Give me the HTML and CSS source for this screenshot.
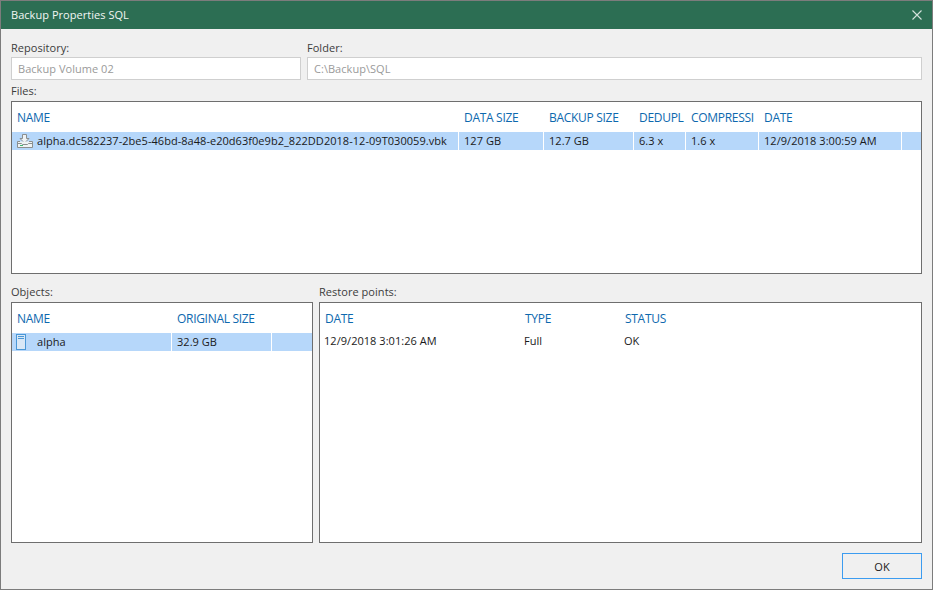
FILE: index.html
```html
<!DOCTYPE html>
<html lang="en">
<head>
<meta charset="utf-8">
<title>Backup Properties SQL</title>
<link rel="stylesheet" href="styles.css">
</head>
<body>
<div class="window">
  <header class="titlebar">
    <span class="title">Backup Properties SQL</span>
    <svg class="close" width="12" height="12" viewBox="0 0 12 12"><path d="M1.5 1.5l9 9M10.5 1.5l-9 9" stroke="#d5e2dc" stroke-width="1.1" fill="none"/></svg>
  </header>
  <main class="content">
    <div class="fields">
      <div class="field">
        <label class="label">Repository:</label>
        <div class="input">Backup Volume 02</div>
      </div>
      <div class="field">
        <label class="label">Folder:</label>
        <div class="input">C:\Backup\SQL</div>
      </div>
    </div>
    <div class="label files-label">Files:</div>
    <section class="list files">
      <div class="row head files-cols">
        <span>NAME</span><span>DATA SIZE</span><span>BACKUP SIZE</span><span>DEDUPL</span><span>COMPRESSI</span><span>DATE</span><span></span>
      </div>
      <div class="row selected files-cols">
        <span class="cell-icon">
          <svg width="18" height="16" viewBox="0 0 18 16"><path d="M6.5 1.5h4v4h2.5l-4.5 4.5L4 5.5h2.5z" fill="#eef2f4" stroke="#8b8f8f"/><path d="M4 8.5H1.5v6h15v-6H13" fill="#eef2f4" stroke="#8b8f8f"/><path d="M1.5 10.5h4l1 1h5l1-1h4" fill="none" stroke="#8b8f8f"/><path d="M4 12.5h3" stroke="#3fb56f" stroke-width="1"/></svg>
          <span class="cell-text">alpha.dc582237-2be5-46bd-8a48-e20d63f0e9b2_822DD2018-12-09T030059.vbk</span>
        </span>
        <span>127 GB</span><span>12.7 GB</span><span>6.3 x</span><span>1.6 x</span><span>12/9/2018 3:00:59 AM</span><span></span>
      </div>
    </section>
    <div class="lower">
      <div class="pane">
        <div class="label">Objects:</div>
        <section class="list grow">
          <div class="row head objects-cols">
            <span>NAME</span><span>ORIGINAL SIZE</span><span></span>
          </div>
          <div class="row selected objects-cols">
            <span class="cell-icon">
              <svg width="18" height="16" viewBox="0 0 18 16"><rect x="0.5" y="0.5" width="9" height="15" fill="#d8e7f6" stroke="#4a97d6"/><path d="M2 2.5h6M2 4.5h6" stroke="#4a97d6"/></svg>
              <span class="cell-text">alpha</span>
            </span>
            <span>32.9 GB</span><span></span>
          </div>
        </section>
      </div>
      <div class="pane">
        <div class="label">Restore points:</div>
        <section class="list grow">
          <div class="row head points-cols">
            <span>DATE</span><span>TYPE</span><span>STATUS</span>
          </div>
          <div class="row points-cols plain">
            <span>12/9/2018 3:01:26 AM</span><span>Full</span><span>OK</span>
          </div>
        </section>
      </div>
    </div>
    <footer class="actions">
      <button class="btn" type="button">OK</button>
    </footer>
  </main>
</div>
</body>
</html>
```

FILE: styles.css
```css
* { box-sizing: border-box; }
html, body { margin: 0; height: 100%; }
body {
  font-family: "Open Sans", "Noto Sans", "Liberation Sans", sans-serif;
  font-size: 11px;
  letter-spacing: 0.04px;
  color: #1a1a1a;
  background: #f0f0f0;
}
.window {
  width: 933px;
  height: 590px;
  border: 1px solid #7c7c7c;
  display: flex;
  flex-direction: column;
  background: #f0f0f0;
  overflow: hidden;
}
.titlebar {
  height: 28px;
  flex: none;
  background: #2c6e53;
  color: #f2f6f4;
  display: flex;
  align-items: center;
  justify-content: space-between;
  padding: 0 9px 0 10px;
}
.title { line-height: 28px; }
.content {
  flex: 1;
  display: flex;
  flex-direction: column;
  padding: 0 10px 10px 10px;
  min-height: 0;
}
.fields {
  display: grid;
  grid-template-columns: 290px 1fr;
  gap: 6px;
  padding-top: 10px;
}
.field { display: flex; flex-direction: column; }
.label {
  color: #3c3c3c;
  height: 18px;
  line-height: 17px;
}
.input {
  height: 23px;
  border: 1px solid #cfcfcf;
  background: #fff;
  color: #9a9a9a;
  padding: 0 6px;
  line-height: 21px;
}
.files-label {
  height: 21px;
  line-height: 21px;
}
.list {
  border: 1px solid #6e6e6e;
  background: #fff;
}
.files { height: 173px; flex: none; }
.row { display: grid; height: 18px; align-items: stretch; }
.row > span {
  padding-left: 5px;
  white-space: nowrap;
  overflow: hidden;
  line-height: 18px;
}
.head { height: 30px; color: #0d68ae; font-size: 12px; letter-spacing: -0.3px; }
.head > span { line-height: 32px; }
.selected { background: #b6d7fa; }
.selected > span { border-right: 1px solid #fff; }
.selected > span:last-child { border-right: 0; }
.cell-icon { display: flex; align-items: center; gap: 3px; padding-left: 4px !important; }
.cell-icon svg { flex: none; }
.cell-text { line-height: 16px; }
.files-cols { grid-template-columns: 447px 85px 90px 52px 73px 143px 1fr; }
.objects-cols { grid-template-columns: 160px 100px 1fr; }
.points-cols { grid-template-columns: 200px 100px 100px; }
.plain > span { padding-left: 4px; line-height: 16px; }
.lower {
  display: grid;
  grid-template-columns: 302px 1fr;
  gap: 6px;
  height: 269px;
  padding-top: 9px;
  flex: none;
}
.pane { display: flex; flex-direction: column; min-height: 0; }
.pane > .label { height: 19px; }
.grow { flex: 1; }
.actions {
  display: flex;
  justify-content: flex-end;
  padding-top: 10px;
}
.btn {
  width: 80px;
  height: 26px;
  border: 1px solid #3c9cf0;
  background: #f0f0f0;
  color: #1a1a1a;
  font: inherit;
  padding: 0;
}
```
